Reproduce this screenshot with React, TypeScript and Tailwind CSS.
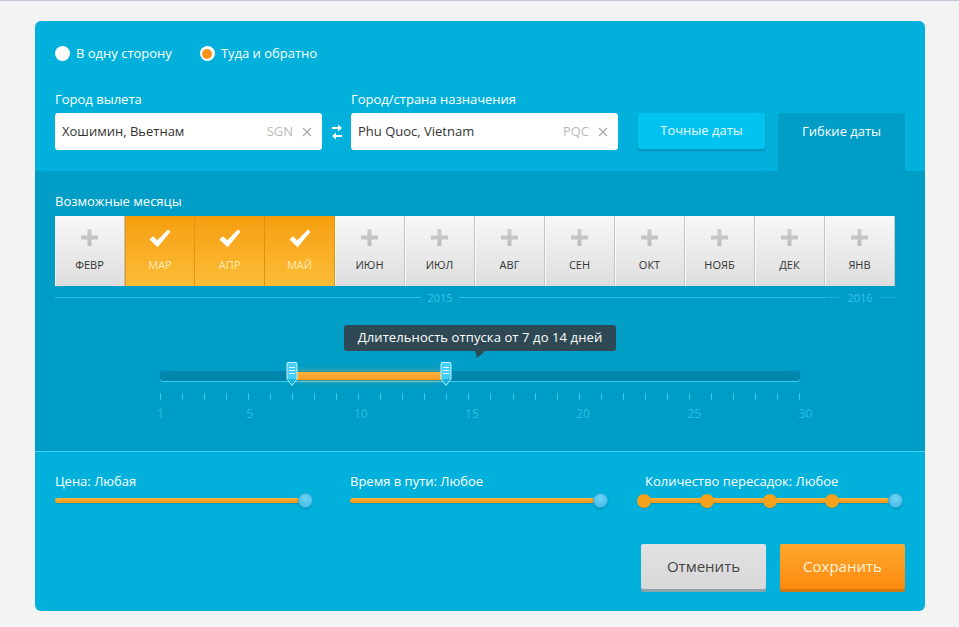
import React from 'react';

const months = [
  { l: 'ФЕВР', on: false },
  { l: 'МАР', on: true },
  { l: 'АПР', on: true },
  { l: 'МАЙ', on: true },
  { l: 'ИЮН', on: false },
  { l: 'ИЮЛ', on: false },
  { l: 'АВГ', on: false },
  { l: 'СЕН', on: false },
  { l: 'ОКТ', on: false },
  { l: 'НОЯБ', on: false },
  { l: 'ДЕК', on: false },
  { l: 'ЯНВ', on: false },
];

const days = Array.from({ length: 30 }, (_, i) => i + 1);
const labeled = new Set([1, 5, 10, 15, 20, 25, 30]);

function Plus() {
  return (
    <svg width="17" height="17" viewBox="0 0 17 17">
      <defs>
        <linearGradient id="pg" x1="0" y1="0" x2="0" y2="1">
          <stop offset="0" stopColor="#cdcdcd" />
          <stop offset="1" stopColor="#bdbdbd" />
        </linearGradient>
      </defs>
      <path d="M6.5 0h4v6.5H17v4h-6.5V17h-4v-6.5H0v-4h6.5z" fill="url(#pg)" />
    </svg>
  );
}

function Check() {
  return (
    <svg width="22" height="19" viewBox="0 0 22 19">
      <path d="M0.5 10.5 L4 7.2 L8.3 11.3 L19 0.5 L21.5 2.8 L8.6 18.2 Z" fill="#ffffff" />
    </svg>
  );
}

function Cross() {
  return (
    <svg width="10" height="10" viewBox="0 0 10 10">
      <path d="M1 1L9 9M9 1L1 9" stroke="#a9a9a9" strokeWidth="1.3" />
    </svg>
  );
}

function Swap() {
  return (
    <svg width="12" height="18" viewBox="0 0 12 18">
      <path d="M1 5h7" stroke="#fff" strokeWidth="2" />
      <path d="M7 1.5L11 5L7 8.5Z" fill="#fff" />
      <path d="M11 13H4" stroke="#fff" strokeWidth="2" />
      <path d="M5 9.5L1 13L5 16.5Z" fill="#fff" />
    </svg>
  );
}

function Handle() {
  return (
    <svg width="12" height="25" viewBox="0 0 12 25">
      <path
        d="M1 1.5Q1 0.5 2 0.5H10Q11 0.5 11 1.5V17L6 23.5L1 17Z"
        fill="#45cff6"
        stroke="#c4f4ff"
        strokeWidth="1"
      />
      <path d="M3 5.5H9M3 8.5H9M3 11.5H9" stroke="#e0faff" strokeWidth="1" />
      <path d="M1.5 17L6 22.8L10.5 17Z" fill="#17b2e0" />
    </svg>
  );
}

function Knob() {
  return (
    <span className="w-[15px] h-[15px] rounded-full bg-[radial-gradient(circle_at_50%_35%,#6fd3f6,#3eb8e6)] border border-[#35acd9] shadow-[0_1px_2px_rgba(0,60,90,0.35)]" />
  );
}

function Dot() {
  return <span className="w-[14px] h-[14px] rounded-full bg-[#f6a21c] shadow-[0_1px_1px_rgba(0,60,90,0.2)]" />;
}

function SimpleSlider({ label }: { label: string }) {
  return (
    <div className="w-[250px]">
      <div className="text-[13px] leading-[18px] text-white">{label}</div>
      <div className="mt-[3px] h-[15px] relative flex items-center">
        <div className="w-[250px] h-[5px] rounded-full bg-gradient-to-b from-[#f9b43e] to-[#ef9718] shadow-[0_1px_1px_rgba(0,70,100,0.25)]" />
        <div className="absolute right-[-8px] top-0 flex">
          <Knob />
        </div>
      </div>
    </div>
  );
}

export default function App() {
  return (
    <div className="min-h-screen bg-[#f3f3f4] border-t border-[#bcc6d4] pt-[20px] pl-[35px] font-['Open_Sans',sans-serif]">
      <div className="w-[890px] rounded-[6px] overflow-hidden">
        {/* top section */}
        <div className="bg-[#01b1dc] px-[20px] pt-[25px]">
          <div className="flex items-center h-[15px] text-[13px] text-white">
            <span className="w-[15px] h-[15px] rounded-full bg-white" />
            <span className="ml-[6px]">В одну сторону</span>
            <span className="ml-[28px] w-[15px] h-[15px] rounded-full bg-white flex items-center justify-center">
              <span className="w-[10px] h-[10px] rounded-full bg-[#f7931c]" />
            </span>
            <span className="ml-[6px]">Туда и обратно</span>
          </div>

          <div className="flex items-start mt-[29px]">
            <div className="w-[267px]">
              <div className="text-[13px] leading-[18px] text-white">Город вылета</div>
              <div className="mt-[5px] h-[37px] bg-white rounded-[3px] flex items-center pl-[7px] pr-[10px] text-[13px] text-[#333]">
                <span className="flex-1">Хошимин, Вьетнам</span>
                <span className="text-[#b9b9b9]">SGN</span>
                <span className="ml-[9px] flex"><Cross /></span>
              </div>
            </div>
            <div className="w-[29px] h-[60px] pt-[23px] flex items-center justify-center">
              <Swap />
            </div>
            <div className="w-[267px]">
              <div className="text-[13px] leading-[18px] text-white">Город/страна назначения</div>
              <div className="mt-[5px] h-[37px] bg-white rounded-[3px] flex items-center pl-[7px] pr-[10px] text-[13px] text-[#333]">
                <span className="flex-1">Phu Quoc, Vietnam</span>
                <span className="text-[#b9b9b9]">PQC</span>
                <span className="ml-[9px] flex"><Cross /></span>
              </div>
            </div>
            <div className="ml-[20px] mt-[23px] w-[127px] h-[36px] rounded-[2px] bg-[#02c3ef] shadow-[0_2px_2px_rgba(0,110,150,0.45)] flex items-center justify-center text-[13px] text-[#e6f9ff]">
              Точные даты
            </div>
            <div className="ml-[13px] mt-[23px] w-[127px] h-[58px] bg-[#009dc7] rounded-t-[2px]">
              <div className="h-[37px] flex items-center justify-center text-[13px] text-white">Гибкие даты</div>
            </div>
          </div>
        </div>

        {/* middle section */}
        <div className="bg-[#009dc7] h-[280px] px-[20px] pt-[21px]">
          <div className="text-[13px] leading-[18px] text-white">Возможные месяцы</div>
          <div className="mt-[6px] flex">
            {months.map((m, i) =>
              m.on ? (
                <div
                  key={m.l}
                  className={`w-[70px] h-[70px] flex flex-col items-center bg-gradient-to-b from-[#f69e0c] to-[#fcbd36] ${i === 1 ? 'border-l border-[#e6950c]' : ''} border-r border-[#df910c]`}
                >
                  <div className="h-[42px] flex items-center pt-[2px]">
                    <Check />
                  </div>
                  <div className="text-[11px] leading-[14px] text-[#feebb4]">{m.l}</div>
                </div>
              ) : (
                <div
                  key={m.l}
                  className="w-[70px] h-[70px] flex flex-col items-center bg-gradient-to-b from-[#f8f8f8] to-[#dedede] border-r border-[#c5c5c5] shadow-[inset_1px_0_0_#fbfbfb]"
                >
                  <div className="h-[42px] flex items-center pt-[1px]">
                    <Plus />
                  </div>
                  <div className="text-[11px] leading-[14px] text-[#333]">{m.l}</div>
                </div>
              )
            )}
          </div>

          <div className="mt-[5px] h-[12px] flex items-center text-[11px] text-[#3cc3ea]">
            <div className="w-[770px] flex items-center">
              <div className="flex-1 h-px bg-[#25c4ec]" />
              <span className="px-[6px] leading-none">2015</span>
              <div className="flex-1 h-px bg-[#25c4ec]" />
            </div>
            <div className="w-[70px] flex items-center">
              <div className="flex-1 border-t border-dotted border-[#25c4ec]" />
              <span className="px-[7px] leading-none">2016</span>
              <div className="flex-1 border-t border-dotted border-[#25c4ec]" />
            </div>
          </div>

          <div className="mt-[22px] flex justify-center">
            <div className="relative h-[26px] px-[14px] rounded-[3px] bg-[#2e4953] text-white text-[13px] tracking-[0.1px] flex items-center">
              Длительность отпуска от 7 до 14 дней
              <svg className="absolute left-[131px] top-[26px]" width="10" height="7" viewBox="0 0 10 7">
                <path d="M0 0H10L2 7Z" fill="#2e4953" />
              </svg>
            </div>
          </div>

          <div className="mt-[20px] mx-auto w-[640px]">
            <div className="relative h-[10px] rounded-[3px] bg-[#0086ac] shadow-[0_1px_0_#3ccdf1]">
              <div className="absolute left-[137px] top-[1px] w-[145px] h-[8px] bg-gradient-to-b from-[#fdb340] to-[#f59d1d] shadow-[0_0_6px_rgba(255,190,70,0.55)]" />
              <div className="absolute left-[126px] top-[-9px] flex">
                <Handle />
              </div>
              <div className="absolute left-[280px] top-[-9px] flex">
                <Handle />
              </div>
            </div>
            <div className="mt-[12px] flex justify-between">
              {days.map((d) => (
                <div key={d} className="w-px flex flex-col items-center">
                  <div className="w-px h-[7px] bg-[#3bc6ec]" />
                  {labeled.has(d) ? (
                    <div
                      className="mt-[6px] text-[12px] leading-[16px] text-[#2fbde6] whitespace-nowrap"
                      style={{ marginLeft: Math.round((d - 1) * 0.42) }}
                    >
                      {d}
                    </div>
                  ) : null}
                </div>
              ))}
            </div>
          </div>
        </div>

        {/* bottom section */}
        <div className="bg-[#01b1dc] border-t border-[#3fd0f3] px-[20px] pt-[20px] pb-[22px]">
          <div className="flex gap-[45px]">
            <SimpleSlider label="Цена: Любая" />
            <SimpleSlider label="Время в пути: Любое" />
            <div className="w-[250px]">
              <div className="text-[13px] leading-[18px] text-white">Количество пересадок: Любое</div>
              <div className="mt-[3px] h-[15px] relative flex items-center">
                <div className="ml-[-1px] w-[250px] h-[5px] rounded-full bg-gradient-to-b from-[#f9b43e] to-[#ef9718] shadow-[0_1px_1px_rgba(0,70,100,0.25)]" />
                <div className="absolute left-[-8px] right-[-8px] top-0 h-[15px] flex items-center justify-between">
                  <Dot />
                  <Dot />
                  <Dot />
                  <Dot />
                  <Knob />
                </div>
              </div>
            </div>
          </div>

          <div className="mt-[36px] flex justify-end gap-[14px]">
            <div className="w-[125px] h-[45px] rounded-[2px] bg-gradient-to-b from-[#e2e2e2] to-[#d8d8d8] shadow-[0_3px_0_#8fa3ad] flex items-center justify-center text-[15px] text-[#444]">
              Отменить
            </div>
            <div className="w-[125px] h-[45px] rounded-[2px] bg-gradient-to-b from-[#fca82a] to-[#ff8a0e] shadow-[0_3px_0_#d47a12] flex items-center justify-center text-[15px] text-[#fff3dc]">
              Сохранить
            </div>
          </div>
        </div>
      </div>
    </div>
  );
}
